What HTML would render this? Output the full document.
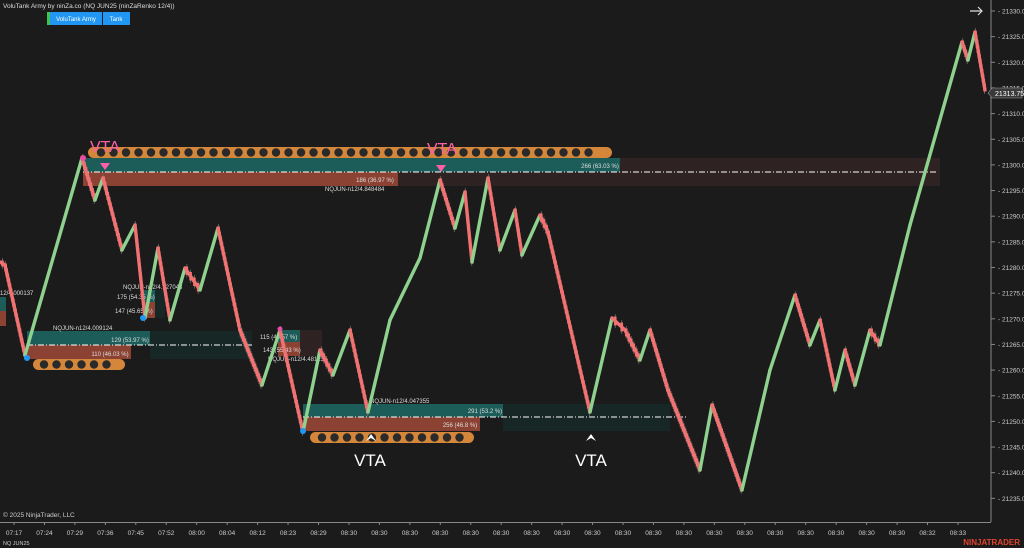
<!DOCTYPE html><html><head><meta charset="utf-8"><style>
body{margin:0;background:#1b1b1b;width:1024px;height:548px;overflow:hidden;font-family:"Liberation Sans",sans-serif}
svg{position:absolute;left:0;top:0}
</style></head><body>
<svg id="s" width="1024" height="548" xmlns="http://www.w3.org/2000/svg" font-family="Liberation Sans, sans-serif">
<rect width="1024" height="548" fill="#1b1b1b"/>
<rect x="620" y="158" width="320" height="28" fill="#2f2222"/>
<rect x="83" y="158" width="537" height="14" fill="#1c5c59"/>
<rect x="83" y="172" width="315" height="14" fill="#8c4233"/>
<rect x="398" y="172" width="222" height="14" fill="#2f2222"/>
<rect x="88" y="147" width="524" height="11" rx="5.5" fill="#d4873a"/>
<g id="c1"></g>
<line x1="83" y1="172" x2="938" y2="172" stroke="#fff" stroke-width="1" stroke-dasharray="6,2,1,2"/>
<text x="600" y="168" font-size="6" fill="#ddd" text-anchor="middle">266 (63.03 %)</text>
<text x="375" y="182" font-size="6" fill="#ddd" text-anchor="middle">186 (36.97 %)</text>
<text x="325" y="191" font-size="6" fill="#ddd">NQJUN-n12/4.848484</text>
<text x="90" y="152" font-size="16" fill="#ff5fa8">VTA</text>
<text x="427" y="154" font-size="16" fill="#ff5fa8">VTA</text>
<path d="M100 163 L110 163 L105 170 Z" fill="#ff5fa8"/>
<path d="M436 165 L446 165 L441 172 Z" fill="#ff5fa8"/>

<rect x="150" y="331" width="102" height="28" fill="#172726"/>
<rect x="27" y="331" width="123" height="14" fill="#1c5c59"/>
<rect x="27" y="345" width="104" height="14" fill="#8c4233"/>
<rect x="33" y="359" width="92" height="11" rx="5.5" fill="#d4873a"/>
<g id="c2"></g>
<line x1="27" y1="345" x2="252" y2="345" stroke="#fff" stroke-dasharray="6,2,1,2"/>
<text x="130" y="342" font-size="6" fill="#ddd" text-anchor="middle">129 (53.97 %)</text>
<text x="110" y="356" font-size="6" fill="#ddd" text-anchor="middle">110 (46.03 %)</text>
<text x="53" y="330" font-size="6" fill="#ddd">NQJUN-n12/4.009124</text>

<rect x="143" y="290" width="12" height="12" fill="#1c5c59"/>
<rect x="143" y="302" width="12" height="16" fill="#8c4233"/>
<rect x="155" y="290" width="10" height="28" fill="#172726"/>
<text x="117" y="299" font-size="6" fill="#ddd">175 (54.35 %)</text>
<text x="115" y="313" font-size="6" fill="#ddd">147 (45.65 %)</text>
<text x="123" y="289" font-size="6" fill="#ddd">NQJUN-n12/4.127043</text>
<rect x="0" y="297" width="6" height="14" fill="#1c5c59"/>
<rect x="0" y="311" width="6" height="15" fill="#8c4233"/>
<text x="0" y="295" font-size="6" fill="#ddd">12/4.000137</text>

<rect x="278" y="330" width="22" height="12" fill="#1c5c59"/>
<rect x="278" y="342" width="27" height="14" fill="#8c4233"/>
<rect x="300" y="330" width="22" height="26" fill="#2f2222"/>
<text x="260" y="339" font-size="6" fill="#ddd">115 (44.57 %)</text>
<text x="263" y="352" font-size="6" fill="#ddd">143 (55.43 %)</text>
<text x="268" y="361" font-size="6" fill="#ddd">NQJUN-n12/4.481233</text>

<rect x="503" y="404" width="167" height="27" fill="#172726"/>
<rect x="303" y="404" width="200" height="13" fill="#1c5c59"/>
<rect x="303" y="417" width="177" height="14" fill="#8c4233"/>
<rect x="310" y="432" width="164" height="11" rx="5.5" fill="#d4873a"/>
<g id="c3"></g>
<line x1="303" y1="417" x2="686" y2="417" stroke="#fff" stroke-dasharray="6,2,1,2"/>
<text x="485" y="413" font-size="6" fill="#ddd" text-anchor="middle">291 (53.2 %)</text>
<text x="460" y="427" font-size="6" fill="#ddd" text-anchor="middle">256 (46.8 %)</text>
<text x="370" y="403" font-size="6" fill="#ddd">NQJUN-n12/4.047355</text>
<path d="M366 441 L371 434 L376 441 L371 438 Z" fill="#fff"/>
<path d="M586 441 L591 434 L596 441 L591 438 Z" fill="#fff"/>
<text x="370" y="466" font-size="17" fill="#fff" text-anchor="middle">VTA</text>
<text x="591" y="466" font-size="17" fill="#fff" text-anchor="middle">VTA</text>

<g id="price"></g>
<circle cx="83" cy="158" r="3" fill="#e94fa0"/>
<circle cx="27" cy="358" r="3" fill="#2196f3"/>
<circle cx="303" cy="431" r="3" fill="#2196f3"/>
<circle cx="143" cy="318" r="3" fill="#2196f3"/>
<circle cx="280" cy="329" r="2.5" fill="#e94fa0"/>

<line x1="991" y1="0" x2="991" y2="522" stroke="#888"/>
<line x1="0" y1="522.5" x2="991" y2="522.5" stroke="#888"/>
<g id="ax" font-size="6.5" fill="#ccc"></g>
<path d="M988 93 L992 88 L1022 88 L1022 98 L992 98 Z" fill="#3a3a3a" stroke="#999" stroke-width=".6"/>
<text x="995" y="96" font-size="7" fill="#fff">21313.75</text>
<path d="M970 11 L982 11 M978 7 L982 11 L978 15" stroke="#ddd" stroke-width="1.2" fill="none"/>
<text x="3" y="8" font-size="6.5" fill="#ddd">VoluTank Army by ninZa.co (NQ JUN25 (ninZaRenko 12/4))</text>
<rect x="47" y="12" width="3" height="13" fill="#3fc34a"/>
<rect x="50" y="12" width="52" height="13" fill="#2196f3"/>
<rect x="103" y="12" width="27" height="13" fill="#2196f3"/>
<text x="76" y="21" font-size="6" fill="#fff" text-anchor="middle">VoluTank Army</text>
<text x="116" y="21" font-size="6" fill="#fff" text-anchor="middle">Tank</text>
<text x="3" y="517" font-size="6.5" fill="#ccc">© 2025 NinjaTrader, LLC</text>
<text x="3" y="545" font-size="5.5" fill="#ccc">NQ JUN25</text>
<text x="1020" y="545" font-size="8" font-weight="bold" fill="#e0442e" text-anchor="end">NINJATRADER</text>
</svg>
<script>
var NS="http://www.w3.org/2000/svg";
function el(p,t,a){var e=document.createElementNS(NS,t);for(var k in a)e.setAttribute(k,a[k]);p.appendChild(e);return e;}
function circ(id,x0,x1,y,r){var g=document.getElementById(id);for(var x=x0;x<=x1;x+=12.5)el(g,"circle",{cx:x,cy:y,r:r,fill:"#2a2a2a"});}
circ("c1",101,600,152.5,4.2);circ("c2",44,118,364.5,4.2);circ("c3",322,466,437.5,4.2);
var ax=document.getElementById("ax");
for(var i=0;i<=19;i++){var p=21330-5*i,y=11+i*25.65;el(ax,"line",{x1:991,y1:y,x2:995,y2:y,stroke:"#888"});var t=el(ax,"text",{x:998,y:y+2.5});t.textContent="- "+p+".00";}
var tl=["07:17","07:24","07:29","07:36","07:45","07:52","08:00","08:04","08:12","08:23","08:29"];
for(var i=0;i<32;i++){var x=14+i*30.45;var s=i<tl.length?tl[i]:(i==30?"08:32":(i==31?"08:33":"08:30"));el(ax,"line",{x1:x,y1:522,x2:x,y2:525,stroke:"#888"});var t=el(ax,"text",{x:x,y:535,"text-anchor":"middle"});t.textContent=s;}
var pts=[[0,262],[5,265],[25,355],[82,158],[95,200],[103,178],[122,250],[135,225],[145,318],[158,248],[170,320],[185,268],[200,290],[218,228],[240,330],[262,385],[280,330],[303,432],[320,350],[333,375],[350,330],[368,412],[390,320],[420,258],[440,180],[455,228],[465,192],[472,262],[488,178],[500,250],[515,210],[522,255],[540,215],[548,232],[590,412],[612,318],[625,330],[640,360],[650,330],[668,390],[700,470],[712,405],[742,490],[770,370],[795,295],[810,345],[820,320],[835,390],[845,350],[855,385],[870,330],[880,345],[910,225],[962,42],[968,60],[975,32],[985,90]];
var g=document.getElementById("price");
for(var i=0;i<pts.length-1;i++){var a=pts[i],b=pts[i+1];var up=b[1]<a[1];var col=up?"#8fd18f":"#f07272";
var n=Math.max(1,Math.round(Math.abs(b[1]-a[1])/5));
for(var k=0;k<n;k++){var x=a[0]+(b[0]-a[0])*(k+.5)/n;var y0=a[1]+(b[1]-a[1])*k/n,y1=a[1]+(b[1]-a[1])*(k+1)/n;
el(g,"line",{x1:x,y1:y0-4,x2:x,y2:y1+4,stroke:"#6a6a6a","stroke-width":0.8});}
el(g,"line",{x1:a[0],y1:a[1],x2:b[0],y2:b[1],stroke:col,"stroke-width":3.4,"stroke-linecap":"round"});
for(var k=0;k<n;k++){var x=a[0]+(b[0]-a[0])*(k+.5)/n;var y0=a[1]+(b[1]-a[1])*k/n,y1=a[1]+(b[1]-a[1])*(k+1)/n;
el(g,"line",{x1:x,y1:y0-1.5,x2:x,y2:y1+1.5,stroke:col,"stroke-width":2.6});}}
</script>
</body></html>
